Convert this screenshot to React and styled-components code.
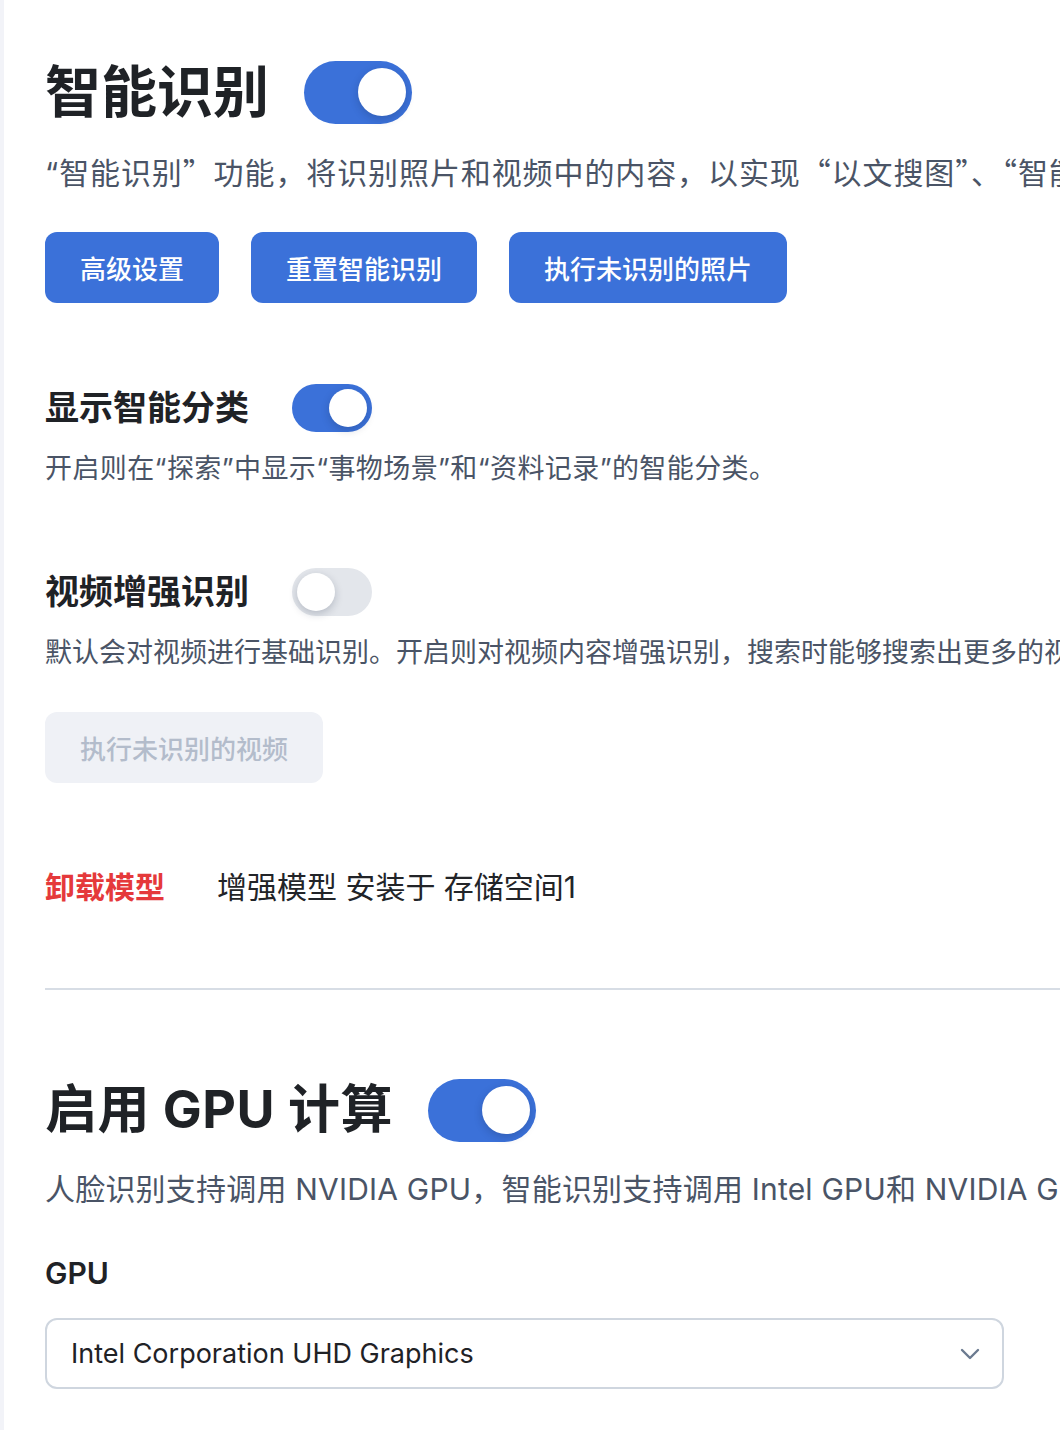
import React from "react";
import styled, { createGlobalStyle } from "styled-components";

const Global = createGlobalStyle`
  html, body { margin: 0; padding: 0; background: #ffffff; }
  body {
    font-family: Inter, "Noto Sans CJK SC", sans-serif;
    color: #1f2226;
    -webkit-font-smoothing: antialiased;
  }
`;

const Page = styled.div`
  min-height: 1430px;
  border-left: 4px solid #f2f3f8;
  padding: 60px 0 40px 41px;
  overflow: hidden;
  box-sizing: border-box;
  width: 1060px;
`;

const Row = styled.div`
  display: flex;
  align-items: center;
  gap: ${(p) => p.$gap || 35}px;
  margin-top: ${(p) => p.$mt || 0}px;
  height: ${(p) => p.$h || 64}px;
  white-space: nowrap;
`;

const BigTitle = styled.h1`
  margin: 0;
  font-size: ${(p) => p.$size || 56}px;
  line-height: 64px;
  font-weight: 700;
  color: #1f2226;
  letter-spacing: ${(p) => p.$ls || 0}px;
`;

const SubTitle = styled.h2`
  margin: 0;
  font-size: 34px;
  line-height: 48px;
  font-weight: 600;
  color: #1f2226;
`;

const Desc = styled.p`
  margin: ${(p) => p.$mt || 0}px 0 0;
  font-family: ${(p) =>
    p.$cjk ? `"Noto Sans CJK SC", Inter, sans-serif` : `Inter, "Noto Sans CJK SC", sans-serif`};
  font-size: ${(p) => p.$size || 30}px;
  line-height: ${(p) => p.$lh || 40}px;
  height: ${(p) => p.$lh || 40}px;
  letter-spacing: ${(p) => p.$ls || 0}px;
  color: #4a5466;
  white-space: nowrap;
`;

const LeadQuote = styled.span`
  font-family: Inter, sans-serif;
  line-height: 0;
`;

const ButtonRow = styled.div`
  display: flex;
  gap: 32px;
  margin-top: ${(p) => p.$mt || 0}px;
`;

const Button = styled.button`
  height: 71px;
  padding: 0 35px;
  border: none;
  border-radius: 12px;
  font-family: inherit;
  font-size: 26px;
  font-weight: 500;
  background: ${(p) => (p.disabled ? "#eff1f6" : "#3b71d9")};
  color: ${(p) => (p.disabled ? "#b3bccb" : "#ffffff")};
  cursor: ${(p) => (p.disabled ? "default" : "pointer")};
  white-space: nowrap;
`;

const Track = styled.div`
  position: relative;
  flex: none;
  width: ${(p) => (p.$big ? 108 : 80)}px;
  height: ${(p) => (p.$big ? 63 : 48)}px;
  border-radius: 999px;
  background: ${(p) => (p.$on ? "#3b71d9" : "#e3e6eb")};
`;

const Knob = styled.span`
  position: absolute;
  top: 50%;
  transform: translateY(-50%);
  width: ${(p) => (p.$big ? 48 : 38)}px;
  height: ${(p) => (p.$big ? 48 : 38)}px;
  border-radius: 50%;
  background: #ffffff;
  box-shadow: 0 3px 8px rgba(20, 30, 60, 0.22);
  ${(p) => (p.$on ? `right: ${p.$big ? 6 : 5}px;` : `left: 5px;`)}
`;

const Toggle = ({ on, big }) => (
  <Track $on={on} $big={big}>
    <Knob $on={on} $big={big} />
  </Track>
);

const ModelRow = styled.div`
  display: flex;
  align-items: center;
  gap: 52px;
  margin-top: 84px;
  font-size: 30px;
  line-height: 40px;
  white-space: nowrap;
`;

const DangerLink = styled.span`
  color: #e5393b;
  font-weight: 600;
`;

const ModelInfo = styled.span`
  color: #222428;
`;

const Divider = styled.hr`
  margin: 81px 0 0;
  border: none;
  height: 2px;
  background: #d7dde5;
  width: 1100px;
`;

const Label = styled.div`
  margin-top: 44px;
  font-size: 30px;
  line-height: 40px;
  font-weight: 600;
  color: #1f2226;
`;

const Select = styled.div`
  margin-top: 25px;
  width: 959px;
  height: 71px;
  box-sizing: border-box;
  border: 2px solid #cfd6df;
  border-radius: 12px;
  display: flex;
  align-items: center;
  justify-content: space-between;
  padding: 0 22px 0 24px;
  font-size: 27px;
  color: #1f2226;
`;

const Chevron = () => (
  <svg width="20" height="12" viewBox="0 0 20 12" fill="none">
    <path d="M2 2l8 8 8-8" stroke="#6b7a90" strokeWidth="2.4" strokeLinecap="round" strokeLinejoin="round" />
  </svg>
);

export default function App() {
  return (
    <>
      <Global />
      <Page lang="zh-CN">
        <Row $gap={35}>
          <BigTitle>智能识别</BigTitle>
          <Toggle on big />
        </Row>
        <Desc $cjk $mt={27} $ls={0.9}>
          <LeadQuote>“</LeadQuote>智能识别”功能，将识别照片和视频中的内容，以实现“以文搜图”、“智能分类”等功能。
        </Desc>
        <ButtonRow $mt={41}>
          <Button>高级设置</Button>
          <Button>重置智能识别</Button>
          <Button>执行未识别的照片</Button>
        </ButtonRow>

        <Row $gap={43} $mt={81} $h={48}>
          <SubTitle>显示智能分类</SubTitle>
          <Toggle on />
        </Row>
        <Desc $mt={19} $size={27} $lh={36} $ls={0.4}>开启则在“探索”中显示“事物场景”和“资料记录”的智能分类。</Desc>

        <Row $gap={43} $mt={81} $h={48}>
          <SubTitle>视频增强识别</SubTitle>
          <Toggle />
        </Row>
        <Desc $mt={19} $size={27} $lh={36}>默认会对视频进行基础识别。开启则对视频内容增强识别，搜索时能够搜索出更多的视频内容。</Desc>
        <ButtonRow $mt={41}>
          <Button disabled>执行未识别的视频</Button>
        </ButtonRow>

        <ModelRow>
          <DangerLink>卸载模型</DangerLink>
          <ModelInfo>增强模型 安装于 存储空间1</ModelInfo>
        </ModelRow>

        <Divider />

        <Row $gap={35} $mt={88}>
          <BigTitle $size={52} $ls={0.5}>启用 GPU 计算</BigTitle>
          <Toggle on big />
        </Row>
        <Desc $mt={27} $ls={0.2}>人脸识别支持调用 NVIDIA GPU，智能识别支持调用 Intel GPU和 NVIDIA GPU。</Desc>

        <Label>GPU</Label>
        <Select>
          <span>Intel Corporation UHD Graphics</span>
          <Chevron />
        </Select>
      </Page>
    </>
  );
}
